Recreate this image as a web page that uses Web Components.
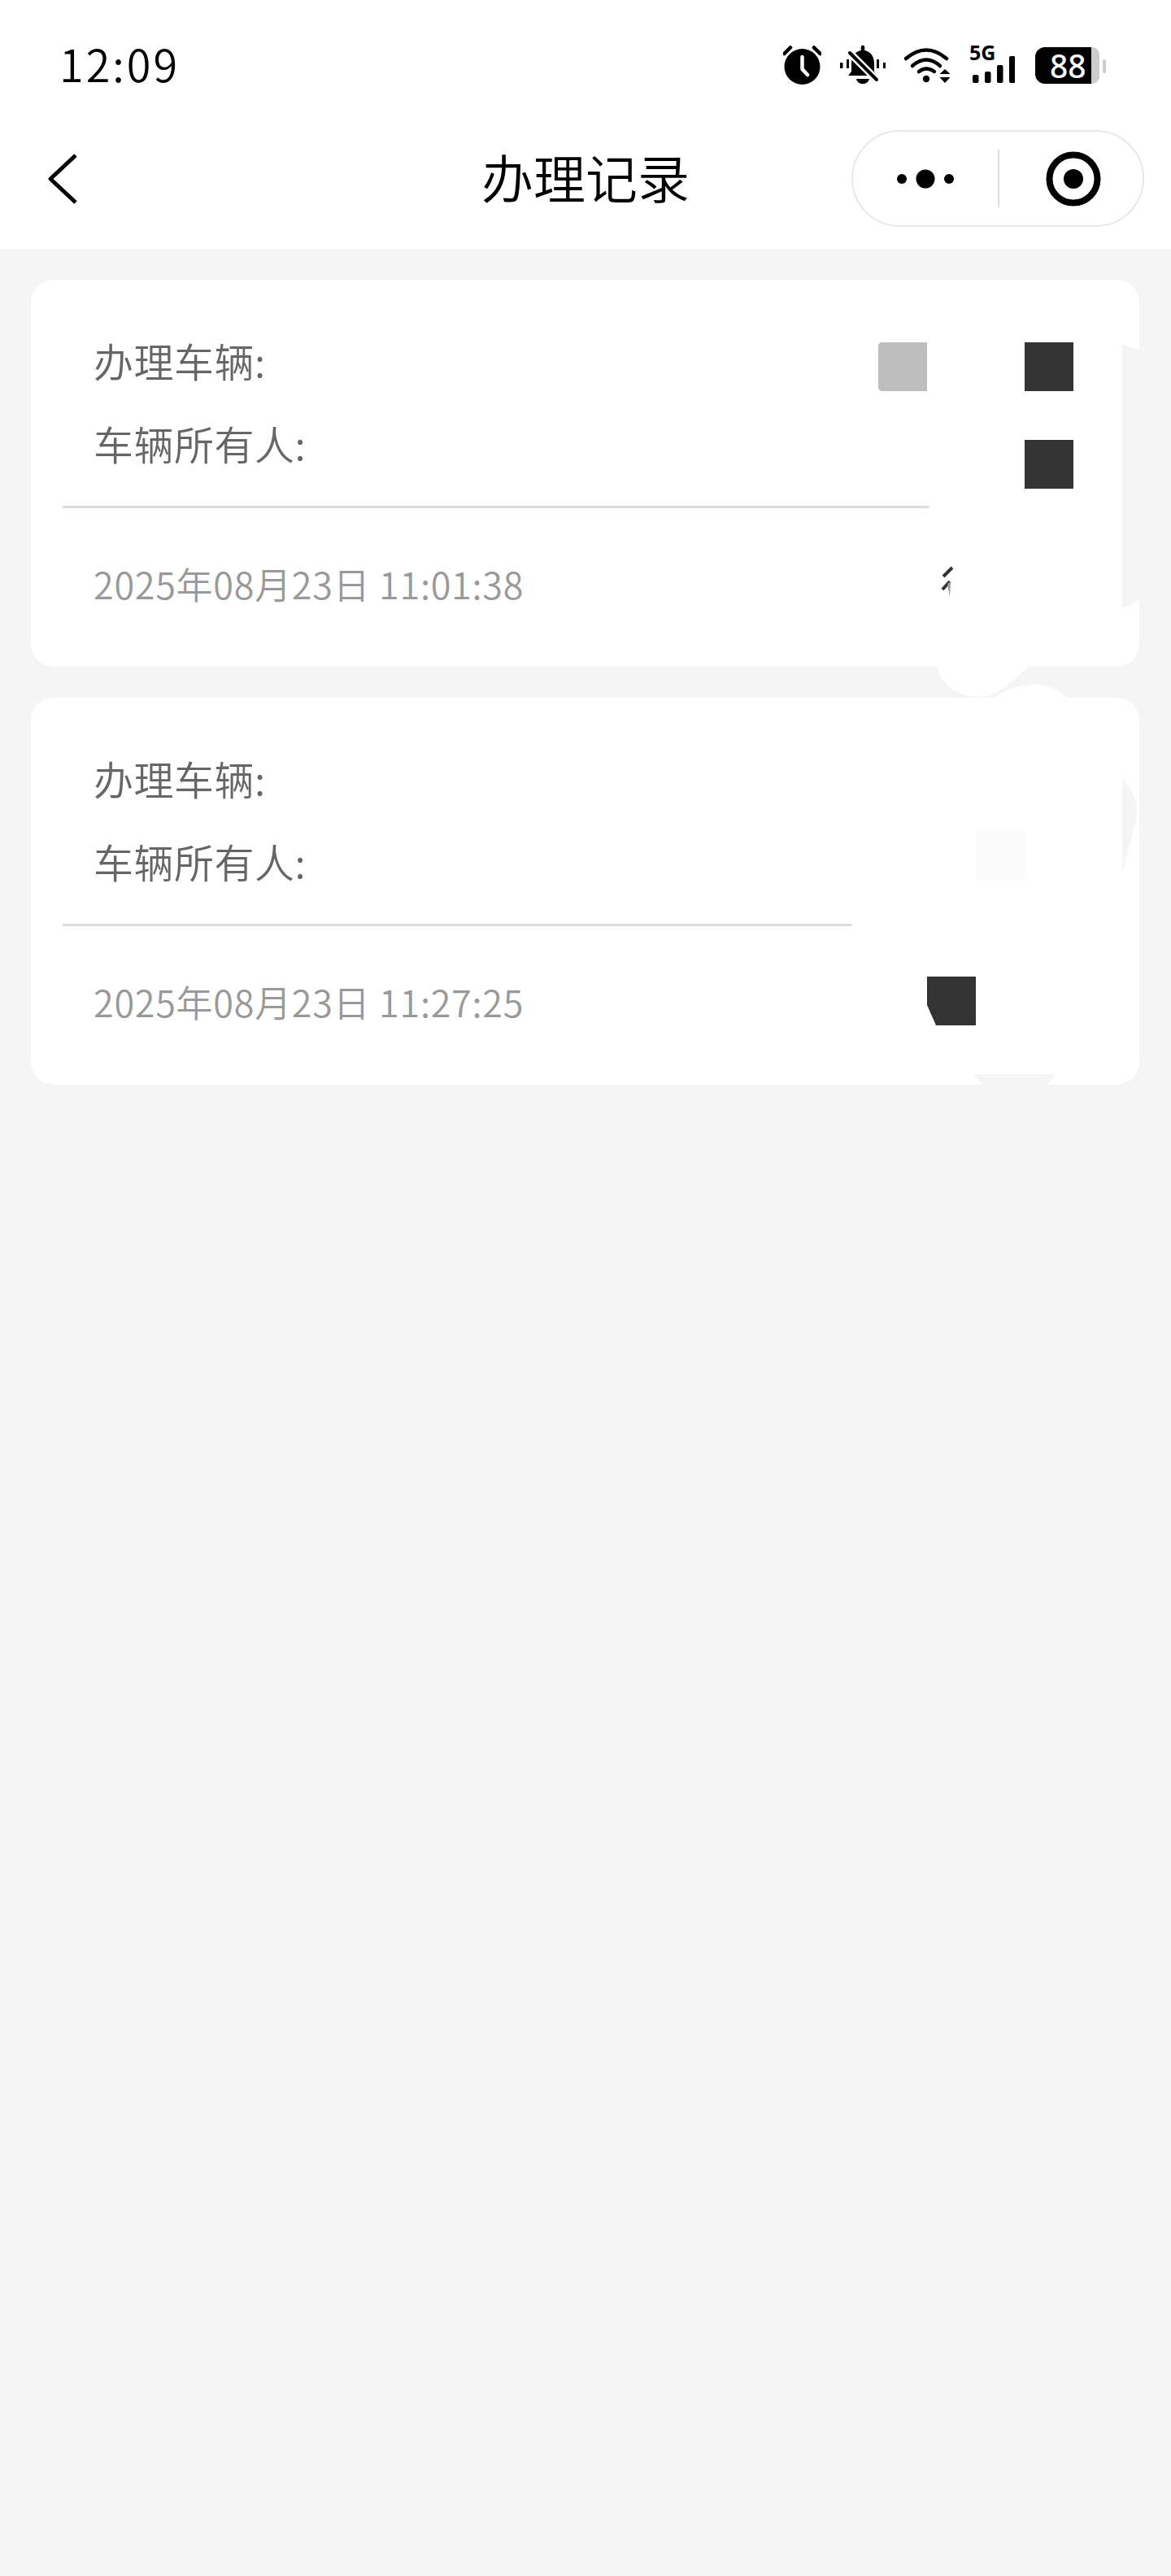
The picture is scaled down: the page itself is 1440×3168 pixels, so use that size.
<!DOCTYPE html>
<html lang="zh-CN">
<head>
<meta charset="utf-8">
<title>办理记录</title>
<style>
  html, body { margin: 0; padding: 0; background: #f5f5f5; }
  body { font-family: "Noto Sans CJK SC", "Noto Sans", sans-serif; }
</style>
</head>
<body>
<record-page>
  <app-header slot="header" title="办理记录"></app-header>

  <record-card date="2025年08月23日 11:01:38" line-end="1143">
    <svg slot="mask" width="1363" height="476" viewBox="0 0 1363 476">
      <path d="M1342 80 L1363 86 V393 Q1354 400 1342 404 Z" fill="#f5f5f5"/>
      <path d="M1114 476 C1120 500 1142 513 1165 513 C1182 513 1194 504 1204 496 L1227 476 Z" fill="#fff"/>
      <path d="M1042 77 H1102 V137 H1047 Q1042 137 1042 132 V82 Q1042 77 1047 77 Z" fill="#bdbdbd"/>
      <rect x="1222" y="77" width="60" height="60" fill="#333"/>
      <rect x="1222" y="197" width="60" height="60" fill="#333"/>
      <path d="M1122 365 L1133 354 M1121 381 L1130 371" stroke="#333" stroke-width="4" fill="none"/>
      <path d="M1127 374 L1130 390 L1131 371 Z" fill="#999"/>
    </svg>
  </record-card>

  <record-card date="2025年08月23日 11:27:25" line-end="1048">
    <svg slot="mask" width="1363" height="476" viewBox="0 0 1363 476">
      <path d="M1185 0 C1198 -10 1216 -16 1232 -16 C1250 -16 1264 -9 1275 0 Z" fill="#fff"/>
      <path d="M1342 100 Q1360 118 1360 140 Q1360 153 1342 215 Z" fill="#f5f5f5"/>
      <path d="M1159 463 H1260 L1250 476 H1170 Z" fill="#f5f5f5"/>
      <rect x="1162" y="163" width="60" height="60" fill="#fbfbfb"/>
      <path d="M1102 343 H1162 V403 H1113 L1102 378 Z" fill="#333"/>
    </svg>
  </record-card>
</record-page>

<script>
  class RecordPage extends HTMLElement {
    constructor() {
      super()
      this.attachShadow({ mode: 'open' }).innerHTML = `
        <style>
          :host { display: block; min-height: 3168px; background: #f5f5f5; }
          main {
            display: flex;
            flex-direction: column;
            gap: 38px;
            padding: 38px 39px 0 38px;
          }
        </style>
        <slot name="header"></slot>
        <main><slot></slot></main>
      `
    }
  }

  const statusIcons = `
    <svg width="47" height="50" viewBox="0 0 47 50">
      <circle cx="23.5" cy="27" r="22" fill="#000"/>
      <path d="M23.5 15 V30 L30 37" fill="none" stroke="#fff" stroke-width="4.5" stroke-linecap="round" stroke-linejoin="round"/>
      <path d="M1.5 11 L9 3.5 M38 3.5 L45.5 11" stroke="#000" stroke-width="4.5" stroke-linecap="round"/>
    </svg>
    <svg width="56" height="50" viewBox="0 0 56 50">
      <path d="M0 22 H3.5 V29 H0 Z M8 18 H11 V29 H8 Z M45 18 H48 V29 H45 Z M53 22 H56 V29 H53 Z" fill="#000"/>
      <path d="M28 3 V9" stroke="#000" stroke-width="4.5" stroke-linecap="round"/>
      <path d="M28 7 C18 7 14 15 14 23 V33 L10 38 H46 L42 33 V23 C42 15 38 7 28 7 Z" fill="#000"/>
      <path d="M20 42 H36 C35 46 32 48 28 48 C24 48 21 46 20 42 Z" fill="#000"/>
      <path d="M12 10 L45 43" stroke="#fff" stroke-width="9"/>
      <path d="M12 10 L45 43" stroke="#000" stroke-width="4" stroke-linecap="round"/>
    </svg>
    <svg width="57" height="50" viewBox="0 0 57 50">
      <g fill="none" stroke="#000" stroke-width="4.5" stroke-linecap="round">
        <path d="M2 17 Q27 -4 52 17"/>
        <path d="M10 26 Q27 11 44 26"/>
        <path d="M18 33 Q27 26 37 33"/>
      </g>
      <circle cx="27" cy="42" r="4.2" fill="#000"/>
      <path d="M50 30 L56.5 36 H43.5 Z M43.5 40 H56.5 L50 47 Z" fill="#000"/>
    </svg>
    <div class="signal">
      <span>5G</span>
      <svg width="56" height="50" viewBox="0 0 56 50">
        <rect x="4" y="37" width="7.5" height="10" rx="2" fill="#000"/>
        <rect x="19" y="33" width="7.5" height="14" rx="2" fill="#000"/>
        <rect x="34" y="25" width="7.5" height="22" rx="2" fill="#000"/>
        <rect x="49" y="14" width="7.5" height="33" rx="2" fill="#000"/>
      </svg>
    </div>
    <div class="battery"><span>88</span></div>
  `

  class AppHeader extends HTMLElement {
    constructor() {
      super()
      this.attachShadow({ mode: 'open' }).innerHTML = `
        <style>
          :host { display: block; background: #fff; padding-bottom: 27px; color: #000; }
          .status {
            height: 160px;
            display: flex;
            align-items: center;
            padding: 0 81px 0 73px;
          }
          .time {
            font-size: 54px;
            font-weight: 350;
            line-height: 1;
            flex: 1;
            letter-spacing: 3px;
            margin-top: -4px;
          }
          .icons { display: flex; align-items: center; gap: 23px; }
          .icons svg { display: block; }
          .signal { position: relative; width: 56px; height: 50px; }
          .signal span {
            position: absolute;
            left: 0;
            top: 0;
            font: 700 25px/18px "Noto Sans", sans-serif;
          }
          .battery {
            position: relative;
            width: 79px;
            height: 45px;
            margin: 0 7px 0 2px;
            border-radius: 12px 9px 9px 12px;
            background: linear-gradient(90deg, #000 69px, #ccc 69px);
            display: flex;
            align-items: center;
            padding-left: 18px;
            box-sizing: border-box;
          }
          .battery::after {
            content: "";
            position: absolute;
            left: 83px;
            top: 15px;
            width: 4px;
            height: 17px;
            border-radius: 2px;
            background: #ccc;
          }
          .battery span {
            font: 500 39px/1 "Noto Sans", sans-serif;
            color: #fff;
          }
          .nav {
            height: 119px;
            display: flex;
            align-items: center;
            justify-content: space-between;
            padding: 0 33px 0 58px;
            position: relative;
          }
          .title {
            position: absolute;
            left: 0;
            right: 0;
            top: -3px;
            text-align: center;
            font-size: 64px;
            font-weight: 350;
            line-height: 119px;
          }
          .capsule {
            position: relative;
            box-sizing: border-box;
            width: 360px;
            height: 119px;
            border: 2.5px solid #e8e8e8;
            border-radius: 60px;
            display: flex;
            align-items: center;
          }
          .capsule .more { width: 178px; display: flex; justify-content: center; }
          .capsule i { width: 2px; height: 71px; background: #ddd; }
          .capsule .ring { flex: 1; display: flex; justify-content: center; padding-left: 6px; }
        </style>
        <div class="status">
          <div class="time">12:09</div>
          <div class="icons">${statusIcons}</div>
        </div>
        <div class="nav">
          <svg width="40" height="64" viewBox="0 0 40 64">
            <path d="M35 3 L4 32 L35 61" fill="none" stroke="#000" stroke-width="5" stroke-linejoin="round"/>
          </svg>
          <div class="title"></div>
          <div class="capsule">
            <div class="more">
              <svg width="72" height="24" viewBox="0 0 72 24">
                <circle cx="7" cy="12" r="6" fill="#000"/>
                <circle cx="36" cy="12" r="11.5" fill="#000"/>
                <circle cx="65" cy="12" r="6" fill="#000"/>
              </svg>
            </div>
            <i></i>
            <div class="ring">
              <svg width="68" height="68" viewBox="0 0 68 68">
                <circle cx="34" cy="34" r="29.5" fill="none" stroke="#000" stroke-width="8"/>
                <circle cx="34" cy="34" r="12" fill="#000"/>
              </svg>
            </div>
          </div>
        </div>
      `
      this.shadowRoot.querySelector('.title').textContent = this.getAttribute('title')
    }
  }

  const cardTemplate = document.createElement('template')
  cardTemplate.innerHTML = `
    <style>
      :host {
        display: block;
        position: relative;
        height: 476px;
        box-sizing: border-box;
        background: #fff;
        border-radius: 28px;
        padding: 52px 0 0 39px;
      }
      .row {
        font-size: 49px;
        font-weight: 350;
        letter-spacing: 0.5px;
        line-height: 102px;
        height: 102px;
        color: #666;
        padding-left: 38px;
        position: relative;
        top: -4px;
      }
      .line {
        height: 3px;
        margin-top: 22px;
        background: #ddd;
        border-radius: 0 2px 2px 0;
      }
      .date {
        font-size: 45px;
        font-weight: 350;
        letter-spacing: 0.7px;
        line-height: 185px;
        color: #999;
        padding-left: 38px;
      }
      ::slotted(svg) {
        position: absolute;
        left: 0;
        top: 0;
        overflow: visible;
      }
    </style>
    <div class="row">办理车辆:</div>
    <div class="row">车辆所有人:</div>
    <div class="line"></div>
    <div class="date"></div>
    <slot name="mask"></slot>
  `

  class RecordCard extends HTMLElement {
    constructor() {
      super()
      this.attachShadow({ mode: 'open' })
      this.shadowRoot.appendChild(cardTemplate.content.cloneNode(true))
    }

    connectedCallback() {
      this.shadowRoot.querySelector('.date').textContent = this.getAttribute('date')
      const end = Number(this.getAttribute('line-end'))
      this.shadowRoot.querySelector('.line').style.width = `${end - 77}px`
    }
  }

  customElements.define('record-page', RecordPage)
  customElements.define('app-header', AppHeader)
  customElements.define('record-card', RecordCard)
</script>
</body>
</html>
